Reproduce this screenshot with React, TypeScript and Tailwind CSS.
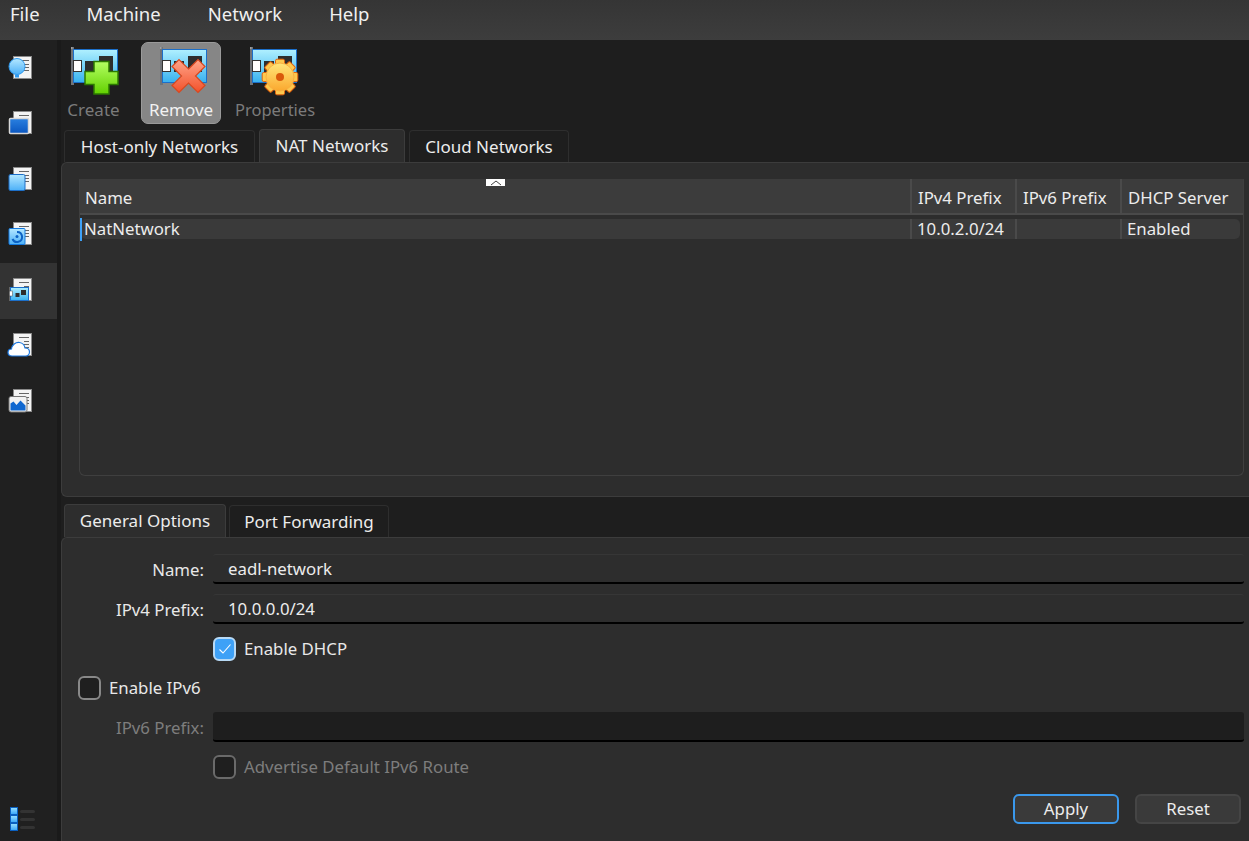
import type { ReactNode } from 'react'

function Card() {
  return (
    <g>
      <rect x="3" y="3" width="3" height="38" fill="#6f7378" />
      <rect x="3" y="3" width="1.500" height="2" fill="#a0a0a0" />
      <rect x="5.500" y="5.500" width="44" height="33" fill="url(#cardFill)" stroke="#1c6fc9" />
      <rect x="5.500" y="16.500" width="8" height="11" fill="#fff" stroke="#333" />
      <rect x="17" y="17" width="10" height="11" fill="#2d2d2d" />
      <rect x="31" y="12" width="14" height="16" fill="#2d2d2d" />
    </g>
  )
}

function Defs() {
  return (
    <svg width="0" height="0" className="absolute">
      <defs>
        <linearGradient id="cardFill" x1="0" y1="0" x2="0" y2="1">
          <stop offset="0" stopColor="#b0f0ff" />
          <stop offset="1" stopColor="#38b2f0" />
        </linearGradient>
        <linearGradient id="plusFill" x1="0" y1="0" x2="0" y2="1">
          <stop offset="0" stopColor="#b4ff62" />
          <stop offset="1" stopColor="#62d000" />
        </linearGradient>
        <linearGradient id="crossFill" x1="0" y1="0" x2="0" y2="1">
          <stop offset="0" stopColor="#ffa58a" />
          <stop offset="1" stopColor="#f2512a" />
        </linearGradient>
        <linearGradient id="gearFill" x1="0" y1="0" x2="0" y2="1">
          <stop offset="0" stopColor="#ffe67a" />
          <stop offset="1" stopColor="#fba82e" />
        </linearGradient>
        <linearGradient id="blueFill" x1="0" y1="0" x2="0" y2="1">
          <stop offset="0" stopColor="#b4e8ff" />
          <stop offset="1" stopColor="#4cb0f8" />
        </linearGradient>
        <linearGradient id="deepFill" x1="0" y1="0" x2="0" y2="1">
          <stop offset="0" stopColor="#2a80e0" />
          <stop offset="1" stopColor="#0a56c0" />
        </linearGradient>
      </defs>
    </svg>
  )
}

function CreateIcon() {
  return (
    <svg width="56" height="52" viewBox="0 0 56 52" className="block">
      <Card />
      <path d="M26 17.500h15v10h9v13h-9v9.500H26v-9.500h-9v-13h9z" fill="url(#plusFill)" stroke="#2c7a00" strokeWidth="1.500" />
    </svg>
  )
}

function RemoveIcon() {
  return (
    <svg width="56" height="52" viewBox="0 0 56 52" className="block">
      <Card />
      <path
        d="M31.500 25l9.500-9.500 7 7-9.500 9.500 9.500 9.500-7 7-9.500-9.500-9.500 9.500-7-7 9.500-9.500-9.500-9.500 7-7z"
        fill="url(#crossFill)"
        stroke="#d8481f"
        strokeWidth="1.200"
      />
    </svg>
  )
}

function GearIcon() {
  const teeth = [0, 45, 90, 135, 180, 225, 270, 315]
  return (
    <svg width="56" height="52" viewBox="0 0 56 52" className="block">
      <Card />
      <g transform="translate(33 33)">
        {teeth.map((a) => (
          <rect key={a} x="-4.500" y="-17.800" width="9" height="8" rx="1.500" fill="#fdc94f" stroke="#e2640f" transform={`rotate(${a})`} />
        ))}
        <circle r="14" fill="url(#gearFill)" stroke="#f8b040" />
        <circle r="4" fill="#d9590b" />
      </g>
    </svg>
  )
}

function Doc() {
  return (
    <>
      <rect x="6.500" y="0.500" width="18" height="22" fill="#f4f4f4" stroke="#8a8a8a" />
      <rect x="12" y="4" width="10" height="1" fill="#666" />
      <rect x="17" y="8" width="5" height="1" fill="#666" />
      <rect x="17" y="11" width="5" height="1" fill="#666" />
      <rect x="17" y="14" width="5" height="1" fill="#666" />
    </>
  )
}

function SideIcon({ children }: { children: ReactNode }) {
  return (
    <svg width="26" height="26" viewBox="0 0 26 26" className="block">
      <Doc />
      {children}
    </svg>
  )
}

const sideIcons = [
  <SideIcon key="welcome">
    <circle cx="10" cy="10.500" r="8" fill="url(#blueFill)" stroke="#2f9af0" />
    <rect x="8" y="18.500" width="4" height="3" fill="#2f9af0" />
  </SideIcon>,
  <SideIcon key="machines">
    <rect x="2.500" y="7.500" width="19" height="15" rx="1" fill="url(#deepFill)" stroke="#d8d8d8" strokeWidth="1.500" />
  </SideIcon>,
  <SideIcon key="ext">
    <rect x="2" y="7.500" width="16" height="16" rx="1.500" fill="url(#blueFill)" stroke="#1c6fc9" />
  </SideIcon>,
  <SideIcon key="media">
    <rect x="2" y="6.500" width="16" height="16" rx="1" fill="url(#blueFill)" stroke="#1278e0" />
    <path d="M10 10a5 5 0 1 1-4.500 7" fill="none" stroke="#0c62c4" strokeWidth="2" />
    <circle cx="10" cy="14.500" r="1.500" fill="#0c62c4" />
  </SideIcon>,
  <SideIcon key="network">
    <rect x="2" y="9" width="2" height="14" fill="#666" />
    <rect x="3.500" y="9.500" width="18" height="13" fill="url(#cardFill)" stroke="#1c6fc9" />
    <rect x="2.500" y="13" width="3" height="5" fill="#fff" stroke="#444" strokeWidth="0.500" />
    <rect x="8.500" y="15" width="4" height="4" fill="#2d2d2d" />
    <rect x="14" y="12" width="5" height="5" fill="#2d2d2d" />
  </SideIcon>,
  <SideIcon key="cloud">
    <path d="M5 23c-3 0-4-2-4-3.500 0-2 1.500-3.500 3.500-3.500 .5-4 4-7 8-6.500 3 .5 5 2.500 5.500 5.500 2.500 0 4.500 1.500 4.500 4 0 2.500-2 4-4 4z" fill="#fff" stroke="#1c78e0" strokeWidth="1.200" />
  </SideIcon>,
  <SideIcon key="activity">
    <rect x="2" y="7.500" width="18" height="15.500" rx="2" fill="#f2f2f2" stroke="#777" />
    <path d="M3.500 21.500v-7l3-2 3 3.500 4-4.500 5 5v5z" fill="#1168d0" />
  </SideIcon>,
]

function Tab({ label, active, w }: { label: string; active?: boolean; w: string }) {
  return (
    <div
      className={`${w} flex items-center justify-center rounded-t-[4px] border border-b-0 text-[17px] ${
        active ? 'h-[33px] border-[#3c3c3c] bg-[#2d2d2d] pb-[1px]' : 'h-[32px] border-[#2e2e2e] bg-[#1e1e1e]'
      }`}
    >
      {label}
    </div>
  )
}

function Field({ label, value, disabled }: { label: string; value?: string; disabled?: boolean }) {
  return (
    <div className="flex items-center">
      <div className={`w-[126px] pt-[1px] text-right ${disabled ? 'text-[#7d7d7d]' : 'text-[#e8e8e8]'}`}>{label}</div>
      <div
        className={`ml-[9px] flex h-[30px] flex-1 items-center rounded-[3px] border-b-2 border-b-black pl-[15px] pt-[1px] ${
          disabled ? 'bg-[#1e1e1e]' : 'border-t border-t-[#363636] bg-[#2d2d2d]'
        }`}
      >
        {value}
      </div>
    </div>
  )
}

function Check({ label, checked, disabled }: { label: string; checked?: boolean; disabled?: boolean }) {
  return (
    <div className="flex items-center gap-[8px]">
      <div
        className={`flex h-[24px] w-[23px] items-center justify-center rounded-[6px] border-2 ${
          checked ? 'border-[#b7d9f5] bg-[#3ea1f7]' : disabled ? 'border-[#6a6a6a] bg-[#1f1f1f]' : 'border-[#888888] bg-[#1f1f1f]'
        }`}
      >
        {checked && (
          <svg width="14" height="12" viewBox="0 0 14 12">
            <path d="M1.500 6.500l3.500 3.500 7.500-8.500" fill="none" stroke="#fff" strokeWidth="1.100" />
          </svg>
        )}
      </div>
      <span className={disabled ? 'text-[#7d7d7d]' : 'text-[#e8e8e8]'}>{label}</span>
    </div>
  )
}

export default function App() {
  return (
    <div className="flex h-[841px] w-[1249px] flex-col overflow-hidden bg-[#1e1e1e] text-[16.800px] text-[#ececec] [font-family:'Noto_Sans',sans-serif]">
      <Defs />
      <div className="flex h-[40px] shrink-0 items-start gap-[47px] bg-gradient-to-b from-[#353535] to-[#3d3d3d] pl-[10px] text-[18.500px] leading-[28px] text-[#f0f0f0]">
        <span>File</span>
        <span>Machine</span>
        <span>Network</span>
        <span>Help</span>
      </div>

      <div className="flex min-h-0 flex-1">
        <div className="flex w-[57px] shrink-0 flex-col bg-[#202020] pt-[1px]">
          {sideIcons.map((icon, i) => (
            <div key={i} className={`flex h-[55.500px] items-center pl-[7px] ${i === 4 ? 'bg-[#333333]' : ''}`}>
              {icon}
            </div>
          ))}
          <div className="mt-auto mb-[10px] flex flex-col pl-[10px]">
            {[0, 1, 2].map((i) => (
              <div key={i} className="flex items-center gap-[2px]">
                <div className="h-[8px] w-[8px] border border-[#0a5fc0] bg-gradient-to-b from-[#8fdcff] to-[#3aa8f8]" />
                <div className="h-[3px] w-[15px] rounded-sm bg-[#333333]" />
              </div>
            ))}
          </div>
        </div>
        <div className="w-[4px] shrink-0 bg-[#1a1a1a]" />

        <div className="flex min-w-0 flex-1 flex-col">
          <div className="flex h-[90px] shrink-0 pt-[2px]">
            <div className="flex h-[82px] w-[65px] flex-col items-center text-[17px] text-[#7b7b7b]">
              <div className="mt-[2px] h-[52px] self-start pl-[7px]">
                <CreateIcon />
              </div>
              <span className="mt-[2px] leading-[24px]">Create</span>
            </div>
            <div className="ml-[15px] flex h-[82px] w-[80px] flex-col items-center rounded-[7px] border border-[#9a9a9a] bg-[#868686] text-[17px] text-[#f2f2f2]">
              <div className="mt-[1px] h-[52px] self-start pl-[15px]">
                <RemoveIcon />
              </div>
              <span className="mt-[2px] leading-[24px]">Remove</span>
            </div>
            <div className="ml-[14px] flex h-[82px] w-[80px] flex-col items-center text-[16.500px] text-[#7b7b7b]">
              <div className="mt-[2px] h-[52px] self-start pl-[12px]">
                <GearIcon />
              </div>
              <span className="mt-[2px] leading-[24px]">Properties</span>
            </div>
          </div>

          <div className="flex h-[32px] shrink-0 items-end gap-[4px] pl-[3px]">
            <Tab label="Host-only Networks" w="w-[191px]" />
            <Tab label="NAT Networks" w="w-[146px]" active />
            <Tab label="Cloud Networks" w="w-[160px]" />
          </div>

          <div className="flex h-[335px] shrink-0 flex-col rounded-tl-[6px] rounded-bl-[6px] border border-r-0 border-[#3c3c3c] bg-[#2d2d2d] pl-[17px] pr-[5px] pt-[16px]">
            <div className="relative flex h-[297px] flex-col rounded-b-[6px] border-x border-b border-[#3f3f3f]">
              <div className="absolute left-[406px] top-0 flex h-[7px] w-[19px] justify-center bg-white">
                <svg width="12" height="7" viewBox="0 0 12 7">
                  <path d="M1 6l5-4 5 4" fill="none" stroke="#444" />
                </svg>
              </div>
              <div className="flex h-[36px] shrink-0 border-b-2 border-[#4a4a4a] bg-[#3c3c3c] pt-[3px]">
                <div className="flex flex-1 items-center pl-[5px]">Name</div>
                <div className="-mt-[3px] flex w-[105px] items-center border-l-2 border-[#4a4a4a] pl-[6px] pt-[3px]">IPv4 Prefix</div>
                <div className="-mt-[3px] flex w-[105px] items-center border-l-2 border-[#4a4a4a] pl-[6px] pt-[3px]">IPv6 Prefix</div>
                <div className="-mt-[3px] flex w-[123px] items-center border-l-2 border-[#4a4a4a] pl-[6px] pt-[3px]">DHCP Server</div>
              </div>
              <div className="relative ml-[1px] mr-[3px] mt-[4px] flex h-[20px] shrink-0 items-center rounded-[5px] bg-[#3a3a3a] pl-[3px]">
                <div className="absolute -left-[1px] -top-[1px] h-[23px] w-[2px] bg-[#3ea1f7]" />
                <div className="flex-1">NatNetwork</div>
                <div className="flex h-[20px] w-[105px] items-center border-l-2 border-[#4a4a4a] pl-[5px]">10.0.2.0/24</div>
                <div className="h-[20px] w-[105px] border-l-2 border-[#4a4a4a]" />
                <div className="flex h-[20px] w-[120px] items-center border-l-2 border-[#4a4a4a] pl-[5px]">Enabled</div>
              </div>
            </div>
          </div>

          <div className="mt-[8px] flex h-[32px] shrink-0 items-end gap-[3px] pl-[3px]">
            <Tab label="General Options" w="w-[162px]" active />
            <Tab label="Port Forwarding" w="w-[160px]" />
          </div>

          <div className="flex min-h-0 flex-1 flex-col rounded-tl-[6px] border border-r-0 border-b-0 border-[#3c3c3c] bg-[#2d2d2d] pl-[16px] pr-[5px] pt-[16px]">
            <div className="flex flex-col gap-[10px]">
              <Field label="Name:" value="eadl-network" />
              <Field label="IPv4 Prefix:" value="10.0.0.0/24" />
            </div>
            <div className="ml-[135px] mt-[12px]">
              <Check label="Enable DHCP" checked />
            </div>
            <div className="mt-[14px]">
              <Check label="Enable IPv6" />
            </div>
            <div className="mt-[12px]">
              <Field label="IPv6 Prefix:" disabled />
            </div>
            <div className="ml-[135px] mt-[12px]">
              <Check label="Advertise Default IPv6 Route" disabled />
            </div>
            <div className="mt-[14px] flex justify-end gap-[16px] pr-[3px]">
              <button className="h-[30px] w-[106px] rounded-[6px] border-2 border-[#3a98ec] bg-[#3a3a3a]">Apply</button>
              <button className="h-[30px] w-[106px] rounded-[6px] border-2 border-[#454545] bg-[#3a3a3a]">Reset</button>
            </div>
          </div>
        </div>
      </div>
    </div>
  )
}
